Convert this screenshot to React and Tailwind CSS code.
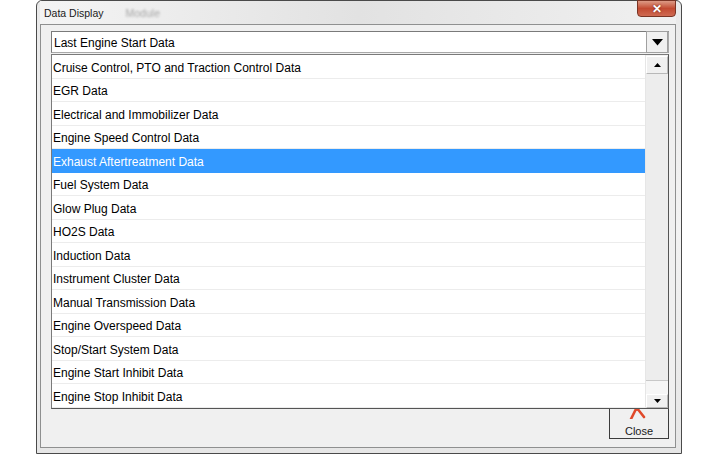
import React from "react";

const items = [
  "Cruise Control, PTO and Traction Control Data",
  "EGR Data",
  "Electrical and Immobilizer Data",
  "Engine Speed Control Data",
  "Exhaust Aftertreatment Data",
  "Fuel System Data",
  "Glow Plug Data",
  "HO2S Data",
  "Induction Data",
  "Instrument Cluster Data",
  "Manual Transmission Data",
  "Engine Overspeed Data",
  "Stop/Start System Data",
  "Engine Start Inhibit Data",
  "Engine Stop Inhibit Data",
];

export default function App() {
  return (
    <div className="w-[718px] h-[455px] bg-white flex overflow-hidden" style={{ fontFamily: '"Liberation Sans", Arial, sans-serif' }}>
      <div className="ml-[36px] w-[646px] h-[454px] border border-[#4a4a4a] rounded-t-[6px] bg-gradient-to-b from-[#e9e9e9] via-[#f3f3f3] to-[#e6e6e6] flex flex-col pl-[3px] pr-[5px] pb-[5px]">
        <div className="h-[23px] flex items-start justify-between bg-gradient-to-r from-[#f4f4f4] via-[#e2e2e2] to-[#f0f0f0]">
          <div className="flex items-center pt-[5px] pl-[4px]">
            <span className="text-[10.5px] text-[#1a1a1a]">Data Display</span>
            <span className="text-[10.5px] text-[#a8a8a8] blur-[1px] ml-[22px]">Module</span>
          </div>
          <div className="mt-[-1px] w-[39px] h-[17px] rounded-b-[4px] border border-[#7a3424] bg-gradient-to-b from-[#dc9a85] via-[#c24a31] to-[#cf6a52] flex items-center justify-center">
            <span className="text-white text-[12px] font-bold leading-none" style={{ textShadow: "0 0 2px #6b2010" }}>✕</span>
          </div>
        </div>
        <div className="flex-1 border border-[#8f9090] bg-[#f0f0f0] flex flex-col pl-[10px] pr-[6px] pt-[6px]">
          <div className="w-[618px] h-[22px] border border-[#a9a9a9] border-t-[#7a7a7a] border-l-[#7a7a7a] bg-white flex items-stretch">
            <div className="flex-1 flex items-center pl-[2px] pt-[2px] text-[12px] text-black">Last Engine Start Data</div>
            <div className="w-[22px] my-[-1px] border border-[#a0a0a0] bg-[#f0f0f0] flex items-center justify-center">
              <svg width="11" height="7" viewBox="0 0 11 7"><path d="M0 0 H11 L5.5 6.5 Z" fill="#000" /></svg>
            </div>
          </div>
          <div className="mt-[1px] w-[618px] h-[355px] border border-[#7a7a7a] border-r-[#555] border-b-[#555] bg-white flex">
            <div className="w-[593px] flex flex-col">
              {items.map((t, i) => (
                <div
                  key={t}
                  className={
                    i === 4
                      ? "h-[23.5px] flex items-center pl-[1px] pt-[3px] text-[12px] bg-[#3399ff] text-white"
                      : "h-[23.5px] flex items-center pl-[1px] pt-[3px] text-[12px] text-black border-b border-[#ececec]"
                  }
                >
                  {t}
                </div>
              ))}
            </div>
            <div className="w-[23px] flex flex-col bg-[#f2f2f2] border-l border-[#e6e6e6]">
              <div className="h-[18px] mt-[1px] border border-[#b8b8b8] border-t-white border-l-white bg-[#f0f0f0] flex items-center justify-center">
                <svg width="7" height="4" viewBox="0 0 7 4"><path d="M0 4 H7 L3.5 0 Z" fill="#000" /></svg>
              </div>
              <div className="h-[307px] border-b border-[#c8c8c8] bg-[#ededed]"></div>
              <div className="flex-1 bg-[#f6f6f6]"></div>
              <div className="h-[14px] border border-[#b8b8b8] border-t-white border-l-white bg-[#f0f0f0] flex items-center justify-center">
                <svg width="7" height="4" viewBox="0 0 7 4"><path d="M0 0 H7 L3.5 4 Z" fill="#000" /></svg>
              </div>
            </div>
          </div>
          <div className="flex justify-end">
            <div className="w-[60px] h-[30px] border border-[#3c3c3c] border-t-0 bg-[#f0f0f0] flex flex-col items-center">
              <svg width="18" height="10" viewBox="0 0 18 10" className="ml-[-2px]">
                <path d="M2 10 L6.5 1 Q8 -0.5 9.5 1 L15 8" stroke="#e0492a" strokeWidth="2.6" fill="none" strokeLinecap="round" />
              </svg>
              <span className="mt-[7px] text-[11px] leading-none text-[#1a1a1a]">Close</span>
            </div>
          </div>
        </div>
      </div>
    </div>
  );
}
